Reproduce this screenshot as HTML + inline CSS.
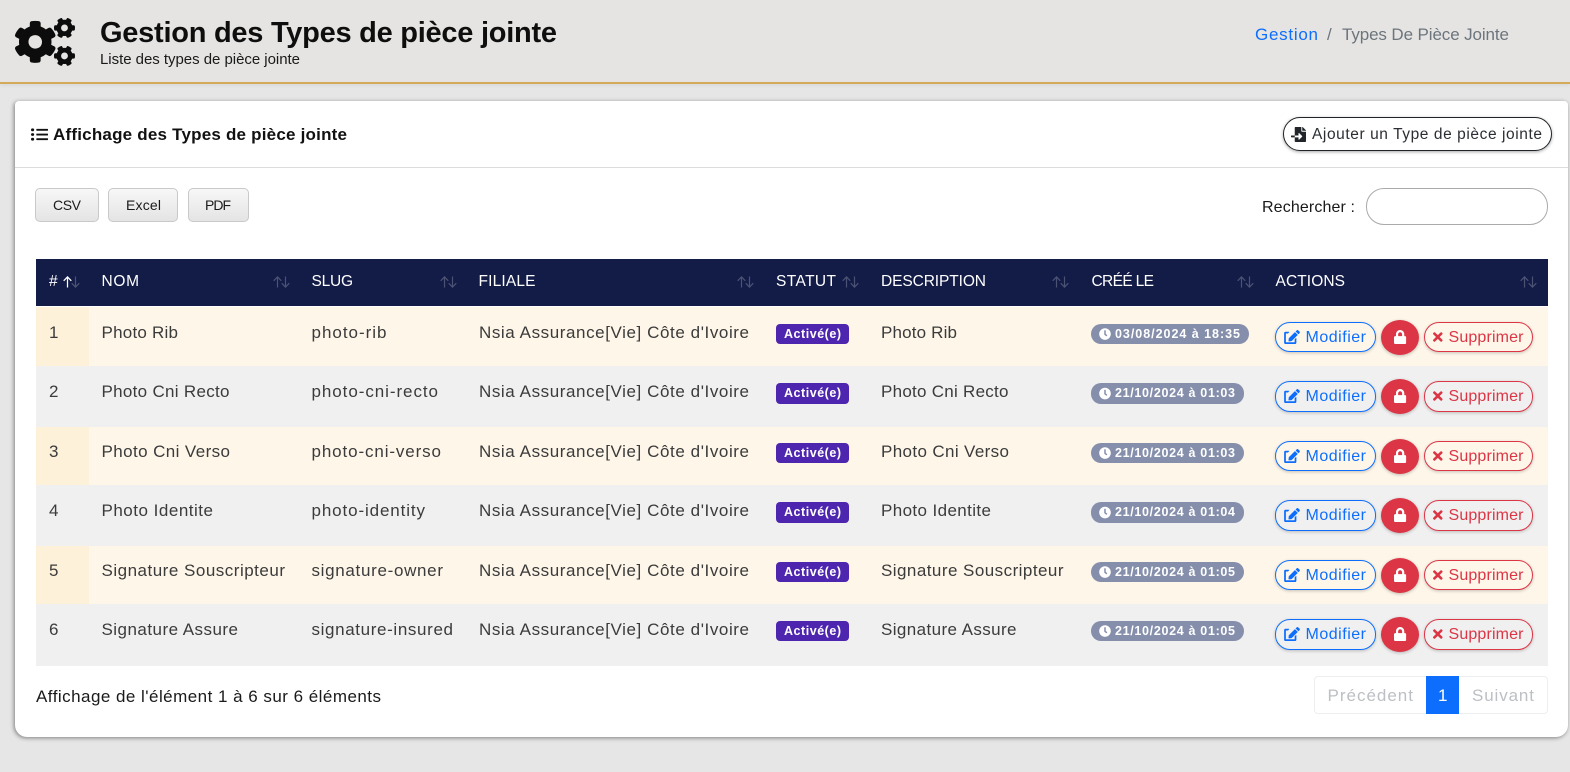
<!DOCTYPE html>
<html lang="fr">
<head>
<meta charset="utf-8">
<title>Gestion des Types de pièce jointe</title>
<style>
html,body{margin:0;padding:0;width:1570px;height:772px;overflow:hidden;background:#e6e6e6;font-family:"Liberation Sans",sans-serif}
.b{position:absolute;box-sizing:border-box}
svg.o{position:absolute;left:0;top:0}
text{font-family:"Liberation Sans",sans-serif;white-space:pre}
.r{font-size:17px;fill:#3b3b3b}
.h{font-size:15.5px;fill:#fff}
.a{font-size:12.5px;font-weight:bold;fill:#fff}
.m{font-size:16px;fill:#0d6efd}
.s{font-size:16px;fill:#dc3545}
.cs{font-size:14px;fill:#1a1a1a}
.p{font-size:17px;fill:#bcc0c4}
.mod{left:1275px;width:101px;height:30px;border:1.3px solid #0d6efd;border-radius:15px;box-shadow:0 1px 3px rgba(0,0,0,.22)}
.sup{left:1424px;width:109px;height:30px;border:1.3px solid #dc3545;border-radius:15px;box-shadow:0 1px 3px rgba(0,0,0,.22)}
.lock{left:1381px;width:38px;height:35px;background:#dc3545;border-radius:50%;box-shadow:0 1px 3px rgba(0,0,0,.25)}
.act{left:776px;width:73px;height:20px;background:#4e25ae;border-radius:4px}
.dt{left:1091px;height:20px;background:#858fab;border-radius:10px;width:153px}
.ex{background:linear-gradient(#f7f7f7,#e4e4e4);border:1px solid #c9c9c9;border-radius:5px;top:188px;height:34px}
</style>
</head>
<body>
<div class="b" style="left:0;top:0;width:1570px;height:84px;background:#e5e4e2;border-bottom:2px solid #d4a95a;box-shadow:0 1px 4px rgba(0,0,0,.08)"></div>
<div class="b" style="left:15px;top:101px;width:1553px;height:636px;background:#fff;border-radius:4px 4px 12px 12px;box-shadow:-1px 1px 4px rgba(0,0,0,.45)"></div>
<div class="b" style="left:15px;top:167px;width:1553px;height:1px;background:#dcdcdc"></div>
<div class="b" style="left:1283px;top:117px;width:269px;height:34px;border:1.3px solid #212529;border-radius:17px;background:#fff;box-shadow:0 1px 3px rgba(0,0,0,.35)"></div>
<div class="b ex" style="left:35px;width:64px"></div>
<div class="b ex" style="left:108px;width:70px"></div>
<div class="b ex" style="left:188px;width:61px"></div>
<div class="b" style="left:1366px;top:188px;width:182px;height:37px;border:1px solid #aaa;border-radius:18px;background:#fff"></div>

<div class="b" style="left:35.5px;top:259px;width:1512px;height:47px;background:#131c47"></div>
<div class="b" style="left:35.5px;top:307px;width:1512.500px;height:59px;background:#fef6e9"></div>
<div class="b" style="left:35.5px;top:366px;width:1512.500px;height:61px;background:#f0f0f0"></div>
<div class="b" style="left:35.5px;top:427px;width:1512.500px;height:58px;background:#fef6e9"></div>
<div class="b" style="left:35.5px;top:485px;width:1512.500px;height:61px;background:#f0f0f0"></div>
<div class="b" style="left:35.5px;top:546px;width:1512.500px;height:58px;background:#fef6e9"></div>
<div class="b" style="left:35.5px;top:604px;width:1512.500px;height:62px;background:#f0f0f0"></div>
<div class="b" style="left:35.5px;top:307px;width:53.500px;height:59px;background:#fef1d9"></div>
<div class="b" style="left:35.5px;top:427px;width:53.500px;height:58px;background:#fef1d9"></div>
<div class="b" style="left:35.5px;top:546px;width:53.500px;height:58px;background:#fef1d9"></div>

<div class="b act" style="top:324px"></div><div class="b dt" style="top:324px;width:158px"></div>
<div class="b act" style="top:383px;height:21px"></div><div class="b dt" style="top:383px;height:21px"></div>
<div class="b act" style="top:443px"></div><div class="b dt" style="top:443px"></div>
<div class="b act" style="top:502px;height:21px"></div><div class="b dt" style="top:502px;height:21px"></div>
<div class="b act" style="top:562px"></div><div class="b dt" style="top:562px"></div>
<div class="b act" style="top:621px"></div><div class="b dt" style="top:621px"></div>

<div class="b mod" style="top:322px"></div><div class="b lock" style="top:320px"></div><div class="b sup" style="top:322px"></div>
<div class="b mod" style="top:381px;height:31px"></div><div class="b lock" style="top:379px"></div><div class="b sup" style="top:381px;height:31px"></div>
<div class="b mod" style="top:441px"></div><div class="b lock" style="top:439px"></div><div class="b sup" style="top:441px"></div>
<div class="b mod" style="top:500px;height:31px"></div><div class="b lock" style="top:498px"></div><div class="b sup" style="top:500px;height:31px"></div>
<div class="b mod" style="top:560px"></div><div class="b lock" style="top:558px"></div><div class="b sup" style="top:560px"></div>
<div class="b mod" style="top:619px;height:31px"></div><div class="b lock" style="top:617px"></div><div class="b sup" style="top:619px;height:31px"></div>

<div class="b" style="left:1314px;top:676px;width:234px;height:38px;border:1px solid #eceef0;border-radius:4px;background:#fff"></div>
<div class="b" style="left:1426px;top:676px;width:33px;height:38px;background:#0d6efd"></div>

<svg class="o" width="1570" height="772" viewBox="0 0 1570 772" xmlns="http://www.w3.org/2000/svg">
<defs>
<symbol id="lk" viewBox="0 0 448 512"><path fill="#fff" d="M400 224h-24v-72C376 68.2 307.8 0 224 0S72 68.2 72 152v72H48c-26.5 0-48 21.5-48 48v192c0 26.5 21.5 48 48 48h352c26.5 0 48-21.5 48-48V272c0-26.5-21.5-48-48-48zm-104 0H152v-72c0-39.7 32.3-72 72-72s72 32.3 72 72v72z"/></symbol>
<symbol id="ck" viewBox="0 0 512 512"><path fill="#fff" d="M256,8C119,8,8,119,8,256S119,504,256,504,504,393,504,256,393,8,256,8Zm92.49,313h0l-20,25a16,16,0,0,1-22.49,2.5h0l-67-49.72a40,40,0,0,1-15-31.23V112a16,16,0,0,1,16-16h32a16,16,0,0,1,16,16V256l58,42.5A16,16,0,0,1,348.49,321Z"/></symbol>
<symbol id="tm" viewBox="0 0 352 512"><path fill="#dc3545" d="M242.72 256l100.07-100.07c12.28-12.28 12.28-32.19 0-44.48l-22.24-22.24c-12.28-12.28-32.19-12.28-44.48 0L176 189.28 75.93 89.21c-12.28-12.28-32.19-12.28-44.48 0L9.21 111.45c-12.28 12.28-12.28 32.19 0 44.48L109.28 256 9.21 356.07c-12.28 12.28-12.28 32.19 0 44.48l22.24 22.24c12.28 12.28 32.2 12.28 44.48 0L176 322.72l100.07 100.07c12.28 12.28 32.2 12.28 44.48 0l22.24-22.24c12.28-12.28 12.28-32.19 0-44.48L242.72 256z"/></symbol>
<symbol id="ed" viewBox="0 0 576 512"><path fill="#0d6efd" d="M402.6 83.2l90.2 90.2c3.8 3.8 3.8 10 0 13.8L274.4 405.6l-92.8 10.3c-12.4 1.4-22.9-9.1-21.5-21.5l10.3-92.8L388.8 83.2c3.8-3.8 10-3.8 13.8 0zm162-22.9l-48.8-48.8c-15.2-15.2-39.9-15.2-55.2 0l-35.4 35.4c-3.8 3.8-3.8 10 0 13.8l90.2 90.2c3.8 3.8 10 3.8 13.8 0l35.4-35.4c15.2-15.3 15.2-40 0-55.2zM384 346.2V448H64V128h73.1c3.2 0 6.2-1.3 8.5-3.5l40-40c7.6-7.6 2.2-20.5-8.5-20.5H48C21.5 64 0 85.5 0 112v352c0 26.5 21.5 48 48 48h352c26.5 0 48-21.5 48-48V306.2c0-10.7-12.9-16-20.5-8.5l-40 40c-2.2 2.3-3.5 5.3-3.5 8.5z"/></symbol>
<symbol id="sd" viewBox="0 0 17 12"><g fill="none" stroke="#4b5274" stroke-width="1.2"><path d="M4.500 11.500V.9M.7 4.800L4.500.9l3.800 3.900"/><path d="M12.500.5v10.600M8.700 7.200l3.800 3.900 3.800-3.900"/></g></symbol>
</defs>

<!-- header -->
<svg x="15" y="18" width="60" height="48" viewBox="0 0 640 512"><path fill="#0c0c0c" d="M512.1 191l-8.2 14.3c-3 5.3-9.4 7.5-15.1 5.4-11.8-4.4-22.6-10.7-32.1-18.6-4.6-3.8-5.8-10.5-2.8-15.7l8.2-14.3c-6.9-8-12.3-17.3-15.9-27.4h-16.5c-6 0-11.2-4.3-12.2-10.3-2-12-2.1-24.6 0-37.1 1-6 6.2-10.4 12.2-10.4h16.5c3.6-10.1 9-19.4 15.9-27.4l-8.2-14.3c-3-5.2-1.9-11.9 2.8-15.7 9.5-7.9 20.4-14.2 32.1-18.6 5.7-2.1 12.1.1 15.1 5.4l8.2 14.3c10.5-1.9 21.2-1.9 31.7 0L552 6.3c3-5.3 9.4-7.5 15.1-5.4 11.8 4.4 22.6 10.7 32.1 18.6 4.6 3.8 5.8 10.5 2.8 15.7l-8.2 14.3c6.9 8 12.3 17.3 15.9 27.4h16.5c6 0 11.2 4.3 12.2 10.3 2 12 2.1 24.6 0 37.1-1 6-6.2 10.4-12.2 10.4h-16.5c-3.6 10.1-9 19.4-15.9 27.4l8.2 14.3c3 5.2 1.9 11.9-2.8 15.7-9.5 7.9-20.4 14.2-32.1 18.6-5.7 2.1-12.1-.1-15.1-5.4l-8.2-14.3c-10.4 1.9-21.2 1.9-31.7 0zm-10.5-58.8c38.5 29.6 82.4-14.3 52.8-52.8-38.5-29.7-82.4 14.3-52.8 52.8zM386.3 286.1l33.7 16.8c10.1 5.8 14.5 18.1 10.5 29.1-8.9 24.2-26.4 46.4-42.6 65.8-7.4 8.9-20.2 11.1-30.3 5.3l-29.1-16.8c-16 13.7-34.6 24.6-54.9 31.7v33.6c0 11.6-8.3 21.6-19.7 23.6-24.6 4.2-50.4 4.4-75.9 0-11.5-2-20-11.9-20-23.6V418c-20.3-7.2-38.9-18-54.9-31.7L74 403c-10 5.8-22.9 3.6-30.3-5.3-16.2-19.4-33.3-41.6-42.2-65.7-4-10.9.4-23.2 10.5-29.1l33.3-16.8c-3.9-20.9-3.9-42.4 0-63.4L12 205.8c-10.1-5.8-14.6-18.1-10.5-29 8.9-24.2 26-46.4 42.2-65.8 7.4-8.9 20.2-11.1 30.3-5.3l29.1 16.8c16-13.7 34.6-24.6 54.9-31.7V57.1c0-11.5 8.2-21.5 19.6-23.5 24.6-4.2 50.5-4.4 76-.1 11.5 2 20 11.9 20 23.6v33.6c20.3 7.2 38.9 18 54.9 31.7l29.1-16.8c10-5.8 22.9-3.6 30.3 5.3 16.2 19.4 33.2 41.6 42.1 65.8 4 10.9.1 23.2-10 29.1l-33.7 16.8c3.9 21 3.9 42.5 0 63.5zm-117.6 21.1c59.2-77-28.7-164.9-105.7-105.7-59.2 77 28.7 164.9 105.7 105.7zm243.4 182.7l-8.2 14.3c-3 5.3-9.4 7.5-15.1 5.4-11.8-4.4-22.6-10.7-32.1-18.6-4.6-3.8-5.8-10.5-2.8-15.7l8.2-14.3c-6.9-8-12.3-17.3-15.9-27.4h-16.5c-6 0-11.2-4.3-12.2-10.3-2-12-2.1-24.6 0-37.1 1-6 6.2-10.4 12.2-10.4h16.5c3.6-10.1 9-19.4 15.9-27.4l-8.2-14.3c-3-5.2-1.9-11.9 2.8-15.7 9.5-7.9 20.4-14.2 32.1-18.6 5.7-2.1 12.1.1 15.1 5.4l8.2 14.3c10.5-1.9 21.2-1.9 31.7 0l8.2-14.3c3-5.3 9.4-7.5 15.1-5.4 11.8 4.4 22.6 10.7 32.1 18.6 4.6 3.8 5.8 10.5 2.8 15.7l-8.2 14.3c6.9 8 12.3 17.3 15.9 27.4h16.5c6 0 11.2 4.3 12.2 10.3 2 12 2.1 24.6 0 37.1-1 6-6.2 10.4-12.2 10.4h-16.5c-3.6 10.1-9 19.4-15.9 27.4l8.2 14.3c3 5.2 1.9 11.9-2.8 15.7-9.5 7.9-20.4 14.2-32.1 18.6-5.7 2.1-12.1-.1-15.1-5.4l-8.2-14.3c-10.4 1.9-21.2 1.9-31.7 0zM501.6 431c38.5 29.6 82.4-14.3 52.8-52.8-38.5-29.6-82.4 14.3-52.8 52.8z"/></svg>
<text x="100" y="42" textLength="457" style="font-size:29px;font-weight:bold;fill:#0e0e0e">Gestion des Types de pièce jointe</text>
<text x="100" y="64" textLength="200" style="font-size:15px;fill:#1a1a1a">Liste des types de pièce jointe</text>
<text x="1255" y="40" textLength="63" style="font-size:17px;fill:#0d6efd">Gestion</text>
<text x="1327" y="40" style="font-size:17px;fill:#6c757d">/</text>
<text x="1342" y="40" textLength="167" style="font-size:17px;fill:#6c757d">Types De Pièce Jointe</text>

<!-- card head -->
<svg x="31" y="127" width="17" height="15" viewBox="0 0 512 512" preserveAspectRatio="none"><path fill="#111" d="M48 48a48 48 0 1 0 48 48 48 48 0 0 0-48-48zm0 160a48 48 0 1 0 48 48 48 48 0 0 0-48-48zm0 160a48 48 0 1 0 48 48 48 48 0 0 0-48-48zm448 16H176a16 16 0 0 0-16 16v32a16 16 0 0 0 16 16h320a16 16 0 0 0 16-16v-32a16 16 0 0 0-16-16zm0-320H176a16 16 0 0 0-16 16v32a16 16 0 0 0 16 16h320a16 16 0 0 0 16-16V80a16 16 0 0 0-16-16zm0 160H176a16 16 0 0 0-16 16v32a16 16 0 0 0 16 16h320a16 16 0 0 0 16-16v-32a16 16 0 0 0-16-16z"/></svg>
<text x="53" y="140" textLength="294" style="font-size:17px;font-weight:bold;fill:#111">Affichage des Types de pièce jointe</text>
<svg x="1291" y="127" width="15" height="15" viewBox="0 0 512 512"><path fill="#212529" d="M16 288c-8.8 0-16 7.2-16 16v32c0 8.8 7.2 16 16 16h112v-64zm489-183L407.100 7c-4.500-4.500-10.600-7-17-7H384v128h128v-6.100c0-6.300-2.500-12.400-7-16.900zm-153 31V0H152c-13.300 0-24 10.700-24 24v264h128v-65.200c0-14.300 17.300-21.400 27.400-11.300L379 308c6.600 6.700 6.600 17.400 0 24l-95.700 96.400c-10.100 10.100-27.400 3-27.400-11.300V352H128v136c0 13.300 10.700 24 24 24h336c13.300 0 24-10.700 24-24V160H376c-13.200 0-24-10.800-24-24z"/></svg>
<text x="1312" y="139" textLength="230" style="font-size:15.5px;fill:#2b2f33">Ajouter un Type de pièce jointe</text>

<text class="cs" x="53" y="210" textLength="28">CSV</text>
<text class="cs" x="126" y="210" textLength="35">Excel</text>
<text class="cs" x="205" y="210" textLength="26">PDF</text>
<text x="1262" y="212" textLength="93" style="font-size:16px;fill:#1a1a1a">Rechercher :</text>

<!-- table head -->
<text class="h" x="49" y="286" textLength="9">#</text>
<text class="h" x="101.500" y="286" textLength="37.500">NOM</text>
<text class="h" x="311.500" y="286" textLength="41.500">SLUG</text>
<text class="h" x="478.500" y="286" textLength="57">FILIALE</text>
<text class="h" x="776" y="286" textLength="60">STATUT</text>
<text class="h" x="881" y="286" textLength="105">DESCRIPTION</text>
<text class="h" x="1091.500" y="286" textLength="62.500">CRÉÉ LE</text>
<text class="h" x="1275.500" y="286" textLength="69.500">ACTIONS</text>
<use href="#sd" x="63" y="276" width="17" height="12"/>
<path d="M67.500 287.500V276.900M63.700 280.800L67.500 276.900l3.800 3.900" fill="none" stroke="#fff" stroke-width="1.200"/>
<use href="#sd" x="273" y="276" width="17" height="12"/>
<use href="#sd" x="440" y="276" width="17" height="12"/>
<use href="#sd" x="737" y="276" width="17" height="12"/>
<use href="#sd" x="842" y="276" width="17" height="12"/>
<use href="#sd" x="1052" y="276" width="17" height="12"/>
<use href="#sd" x="1237" y="276" width="17" height="12"/>
<use href="#sd" x="1520" y="276" width="17" height="12"/>

<!-- row 1 -->
<text class="r" x="49" y="338">1</text>
<text class="r" x="101.500" y="338" textLength="76.500">Photo Rib</text>
<text class="r" x="311.500" y="338" textLength="75">photo-rib</text>
<text class="r" x="479" y="338" textLength="270">Nsia Assurance[Vie] Côte d'Ivoire</text>
<text class="a" x="784" y="338" textLength="57">Activé(e)</text>
<text class="r" x="881" y="338" textLength="76">Photo Rib</text>
<use href="#ck" x="1099" y="328" width="12" height="12"/>
<text class="a" x="1115" y="338" textLength="125">03/08/2024 à 18:35</text>
<use href="#ed" x="1284" y="330" width="16" height="14"/>
<text class="m" x="1305.500" y="342" textLength="60.500">Modifier</text>
<use href="#lk" x="1394" y="330" width="12.250" height="14"/>
<use href="#tm" x="1433" y="330" width="9.625" height="14"/>
<text class="s" x="1448.500" y="342" textLength="75">Supprimer</text>

<!-- row 2 -->
<text class="r" x="49" y="397">2</text>
<text class="r" x="101.500" y="397" textLength="128">Photo Cni Recto</text>
<text class="r" x="311.500" y="397" textLength="126.500">photo-cni-recto</text>
<text class="r" x="479" y="397" textLength="270">Nsia Assurance[Vie] Côte d'Ivoire</text>
<text class="a" x="784" y="397" textLength="57">Activé(e)</text>
<text class="r" x="881" y="397" textLength="127.500">Photo Cni Recto</text>
<use href="#ck" x="1099" y="387.500" width="12" height="12"/>
<text class="a" x="1115" y="397" textLength="120">21/10/2024 à 01:03</text>
<use href="#ed" x="1284" y="389" width="16" height="14"/>
<text class="m" x="1305.500" y="401" textLength="60.500">Modifier</text>
<use href="#lk" x="1394" y="389" width="12.250" height="14"/>
<use href="#tm" x="1433" y="389" width="9.625" height="14"/>
<text class="s" x="1448.500" y="401" textLength="75">Supprimer</text>

<!-- row 3 -->
<text class="r" x="49" y="457">3</text>
<text class="r" x="101.500" y="457" textLength="128.500">Photo Cni Verso</text>
<text class="r" x="311.500" y="457" textLength="129.500">photo-cni-verso</text>
<text class="r" x="479" y="457" textLength="270">Nsia Assurance[Vie] Côte d'Ivoire</text>
<text class="a" x="784" y="457" textLength="57">Activé(e)</text>
<text class="r" x="881" y="457" textLength="128">Photo Cni Verso</text>
<use href="#ck" x="1099" y="447" width="12" height="12"/>
<text class="a" x="1115" y="457" textLength="120">21/10/2024 à 01:03</text>
<use href="#ed" x="1284" y="449" width="16" height="14"/>
<text class="m" x="1305.500" y="461" textLength="60.500">Modifier</text>
<use href="#lk" x="1394" y="449" width="12.250" height="14"/>
<use href="#tm" x="1433" y="449" width="9.625" height="14"/>
<text class="s" x="1448.500" y="461" textLength="75">Supprimer</text>

<!-- row 4 -->
<text class="r" x="49" y="516">4</text>
<text class="r" x="101.500" y="516" textLength="111.500">Photo Identite</text>
<text class="r" x="311.500" y="516" textLength="113.500">photo-identity</text>
<text class="r" x="479" y="516" textLength="270">Nsia Assurance[Vie] Côte d'Ivoire</text>
<text class="a" x="784" y="516" textLength="57">Activé(e)</text>
<text class="r" x="881" y="516" textLength="110">Photo Identite</text>
<use href="#ck" x="1099" y="506.500" width="12" height="12"/>
<text class="a" x="1115" y="516" textLength="120">21/10/2024 à 01:04</text>
<use href="#ed" x="1284" y="508" width="16" height="14"/>
<text class="m" x="1305.500" y="520" textLength="60.500">Modifier</text>
<use href="#lk" x="1394" y="508" width="12.250" height="14"/>
<use href="#tm" x="1433" y="508" width="9.625" height="14"/>
<text class="s" x="1448.500" y="520" textLength="75">Supprimer</text>

<!-- row 5 -->
<text class="r" x="49" y="576">5</text>
<text class="r" x="101.500" y="576" textLength="183.500">Signature Souscripteur</text>
<text class="r" x="311.500" y="576" textLength="131.500">signature-owner</text>
<text class="r" x="479" y="576" textLength="270">Nsia Assurance[Vie] Côte d'Ivoire</text>
<text class="a" x="784" y="576" textLength="57">Activé(e)</text>
<text class="r" x="881" y="576" textLength="182.500">Signature Souscripteur</text>
<use href="#ck" x="1099" y="566" width="12" height="12"/>
<text class="a" x="1115" y="576" textLength="120">21/10/2024 à 01:05</text>
<use href="#ed" x="1284" y="568" width="16" height="14"/>
<text class="m" x="1305.500" y="580" textLength="60.500">Modifier</text>
<use href="#lk" x="1394" y="568" width="12.250" height="14"/>
<use href="#tm" x="1433" y="568" width="9.625" height="14"/>
<text class="s" x="1448.500" y="580" textLength="75">Supprimer</text>

<!-- row 6 -->
<text class="r" x="49" y="635">6</text>
<text class="r" x="101.500" y="635" textLength="136.500">Signature Assure</text>
<text class="r" x="311.500" y="635" textLength="141.500">signature-insured</text>
<text class="r" x="479" y="635" textLength="270">Nsia Assurance[Vie] Côte d'Ivoire</text>
<text class="a" x="784" y="635" textLength="57">Activé(e)</text>
<text class="r" x="881" y="635" textLength="135.500">Signature Assure</text>
<use href="#ck" x="1099" y="625" width="12" height="12"/>
<text class="a" x="1115" y="635" textLength="120">21/10/2024 à 01:05</text>
<use href="#ed" x="1284" y="627" width="16" height="14"/>
<text class="m" x="1305.500" y="639" textLength="60.500">Modifier</text>
<use href="#lk" x="1394" y="627" width="12.250" height="14"/>
<use href="#tm" x="1433" y="627" width="9.625" height="14"/>
<text class="s" x="1448.500" y="639" textLength="75">Supprimer</text>

<!-- footer -->
<text x="36" y="702" textLength="345" style="font-size:17px;fill:#1a1a1a">Affichage de l'élément 1 à 6 sur 6 éléments</text>
<text class="p" x="1327.500" y="701" textLength="85.500">Précédent</text>
<text x="1438" y="701" textLength="6.500" style="font-size:17px;fill:#fff">1</text>
<text class="p" x="1472" y="701" textLength="62">Suivant</text>
</svg>
</body>
</html>
